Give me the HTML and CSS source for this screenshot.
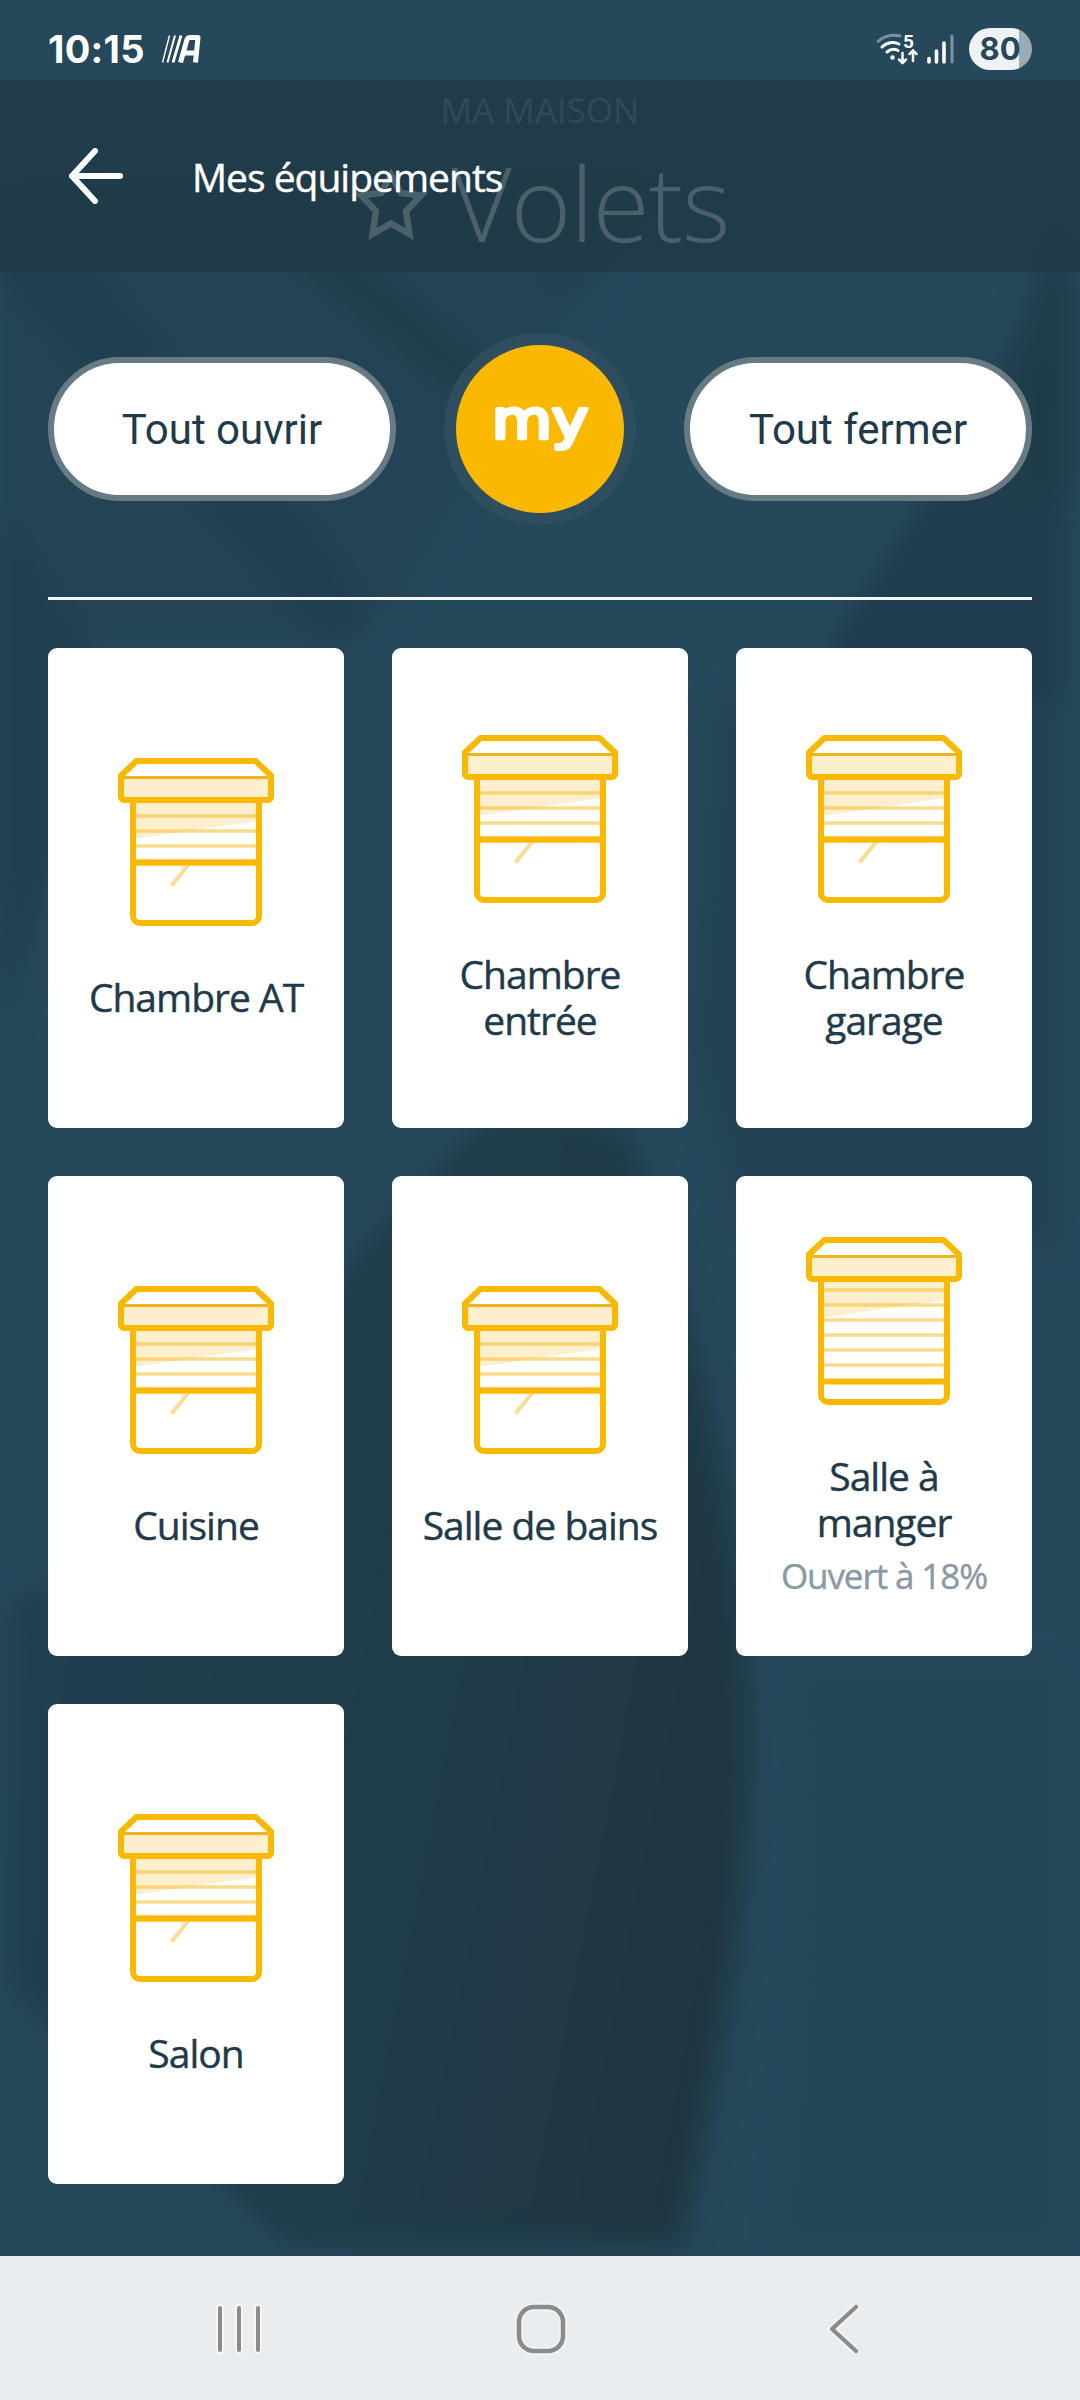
FILE: index.html
```html
<!DOCTYPE html>
<html lang="fr">
  <head>
    <meta charset="UTF-8" />
    <meta name="viewport" content="width=device-width, initial-scale=1.0" />
    <title>Mes équipements - Volets</title>
    <link rel="stylesheet" href="styles.css">
  </head>
  <body>
    <!-- Shared icons -->
    <svg class="sprite" width="0" height="0">
      <symbol id="shutter-half" viewBox="0 0 156 168">
        <path d="M18 44H138V63L18 80.5Z" fill="#fdefcd" />
        <path d="M18 58H138M18 73H138M18 88H138M18 103H138M18 106H138" stroke="#f4bd2b" stroke-opacity="0.55" stroke-width="3.6" />
        <path d="M71 106L53.5 127.5" stroke="#f9dd92" stroke-width="4" />
        <path d="M15 42V158a7 7 0 0 0 7 7H134a7 7 0 0 0 7-7V42M15 104.5H141" fill="none" stroke="#f8b900" stroke-width="6" />
        <path d="M4 19.5H152V42H4Z" fill="#fdefcd" />
        <path d="M4 19.5H152" stroke="#f0b51c" stroke-width="3" />
        <path d="M3 17.5L18.5 3H137.5L153 17.5V39a3 3 0 0 1-3 3H6a3 3 0 0 1-3-3Z" fill="none" stroke="#f8b900" stroke-width="6" stroke-linejoin="round" />
      </symbol>
      <symbol id="shutter-low" viewBox="0 0 156 168">
        <path d="M18 44H138V63L18 80.5Z" fill="#fdefcd" />
        <path d="M18 53H138M18 68H138M18 83H138M18 98H138M18 113H138M18 128H138" stroke="#f4bd2b" stroke-opacity="0.55" stroke-width="3.6" />
        <path d="M15 42V158a7 7 0 0 0 7 7H134a7 7 0 0 0 7-7V42M15 144.5H141" fill="none" stroke="#f8b900" stroke-width="6" />
        <path d="M4 19.5H152V42H4Z" fill="#fdefcd" />
        <path d="M4 19.5H152" stroke="#f0b51c" stroke-width="3" />
        <path d="M3 17.5L18.5 3H137.5L153 17.5V39a3 3 0 0 1-3 3H6a3 3 0 0 1-3-3Z" fill="none" stroke="#f8b900" stroke-width="6" stroke-linejoin="round" />
      </symbol>
    </svg>

    <div class="screen">
      <!-- Blurred backdrop -->
      <svg class="backdrop" viewBox="0 0 1080 2256">
        <defs>
          <filter id="soft" x="-20%" y="-20%" width="140%" height="140%" color-interpolation-filters="sRGB">
            <feGaussianBlur stdDeviation="14" />
          </filter>
          <linearGradient id="blob" x1="0" y1="0.4" x2="1" y2="0.7">
            <stop offset="0" stop-color="#223f50" />
            <stop offset="0.55" stop-color="#1f3c49" />
            <stop offset="1" stop-color="#1e3641" />
          </linearGradient>
        </defs>
        <g filter="url(#soft)">
          <path d="M0 180H680L560 330L400 600L350 640L0 640Z" fill="#244455" />
          <path d="M0 190L90 260L340 560L370 620L330 650L250 560L0 280Z" fill="#213f50" />
          <path d="M220 200L330 230L480 360L500 420L440 380Z" fill="#203e4b" />
          <path d="M480 180H660L560 300Z" fill="#224151" />
          <path d="M0 510L60 600L110 690L40 900L0 1040Z" fill="#213f4f" />
          <path d="M1064 210L1020 330L925 500L835 640L800 720H1064Z" fill="#203d4d" />
          <path d="M1070 250L1035 340L1020 480L1070 500Z" fill="#1f3b47" />
          <path d="M720 700H1064V1250L740 1220L690 1040Z" fill="#234354" />
          <path d="M480 1124C520 1100 600 1100 630 1140C700 1330 748 1560 748 1730C748 1960 700 2140 682 2246H290L220 2180L10 1990V1600C150 1560 240 1490 300 1370C340 1240 430 1190 480 1124Z" fill="url(#blob)" />
          <path d="M800 1670H1060V2240H780C800 2100 815 1900 800 1670Z" fill="#244556" />
        </g>
      </svg>

      <!-- Status bar -->
      <div class="status-bar">
        <span class="time">10:15</span>
        <svg class="operator" width="40" height="28" viewBox="0 0 40 28">
          <path d="M0.5 27.5L7.5 0.5" stroke="#fff" stroke-width="1.4" />
          <path d="M5.5 27.5L13 0.5" stroke="#fff" stroke-width="2" />
          <path d="M11 27.5L19 0.5" stroke="#fff" stroke-width="2.8" />
          <path d="M18.5 27.5L25 4.5Q26 2.5 28 2.5H36L33.5 27.5M23 18H34" fill="none" stroke="#fff" stroke-width="5" stroke-linejoin="round" />
        </svg>
        <div class="status-icons">
          <svg class="wifi" width="44" height="34" viewBox="0 0 44 34">
            <g fill="none" stroke="#fff" stroke-width="3" stroke-linecap="round">
              <path d="M2 9.5C8 4 16 2 24 4" stroke="#7a909c" />
              <path d="M6 15C11 10 18 9.5 23 12" />
              <path d="M11 20C15 16.5 18 16.5 22 18.5" />
              <path d="M26.5 21V31M23 27.5L26.5 31L30 27.5M37 29V18.5M33.5 22L37 18.5L40.5 22" stroke-width="2.5" />
            </g>
            <circle cx="16.5" cy="25.5" r="2.2" fill="#fff" />
            <text class="wifi-gen" x="27" y="15.5">5</text>
          </svg>
          <svg class="signal" width="27" height="30" viewBox="0 0 27 30">
            <path d="M2 24.5V28M9.5 17V28M17 9V28" stroke="#fff" stroke-width="3.6" stroke-linecap="round" />
            <path d="M25 2V28" stroke="#7a909c" stroke-width="3.2" stroke-linecap="round" />
          </svg>
          <div class="battery">80</div>
        </div>
      </div>

      <!-- Header, the page title scrolls underneath -->
      <div class="header">
        <div class="scrolled-title">
          <div class="home-name">MA MAISON</div>
          <div class="category">
            <svg width="74" height="78" viewBox="0 0 74 78">
              <path d="M37 12L47 30L67 32.5L52 48L55.5 71L37 60.5L18.5 71L22 48L7 32.5L27 30Z" fill="none" stroke="#4a606b" stroke-width="6.5" />
            </svg>
            <span>Volets</span>
          </div>
        </div>
        <svg class="back" width="56" height="56" viewBox="0 0 56 56">
          <path d="M52 28H4M27 3L4 28L27 53" fill="none" stroke="#fff" stroke-width="6" stroke-linecap="round" stroke-linejoin="round" />
        </svg>
        <h1>Mes équipements</h1>
      </div>

      <div class="actions">
        <button class="pill">Tout ouvrir</button>
        <button class="my-btn">
          <svg width="168" height="168" viewBox="0 0 168 168">
            <text class="my-text" x="36" y="93" textLength="96" lengthAdjust="spacingAndGlyphs">my</text>
          </svg>
        </button>
        <button class="pill">Tout fermer</button>
      </div>

      <div class="grid">
        <div class="card">
          <svg class="shutter"><use href="#shutter-half" /></svg>
          <div class="name">Chambre AT</div>
        </div>
        <div class="card">
          <svg class="shutter"><use href="#shutter-half" /></svg>
          <div class="name">Chambre<br>entrée</div>
        </div>
        <div class="card">
          <svg class="shutter"><use href="#shutter-half" /></svg>
          <div class="name">Chambre<br>garage</div>
        </div>
        <div class="card">
          <svg class="shutter"><use href="#shutter-half" /></svg>
          <div class="name">Cuisine</div>
        </div>
        <div class="card">
          <svg class="shutter"><use href="#shutter-half" /></svg>
          <div class="name">Salle de bains</div>
        </div>
        <div class="card">
          <svg class="shutter"><use href="#shutter-low" /></svg>
          <div class="name">Salle à<br>manger</div>
          <div class="state">Ouvert à 18%</div>
        </div>
        <div class="card">
          <svg class="shutter"><use href="#shutter-half" /></svg>
          <div class="name">Salon</div>
        </div>
      </div>
    </div>

    <!-- Android navigation bar -->
    <div class="nav-bar">
      <svg width="48" height="52" viewBox="0 0 48 52">
        <path d="M5 5V47M24 5V47M43 5V47" stroke="#f6f6f6" stroke-width="8" stroke-linecap="round" />
        <path d="M5 5V47M24 5V47M43 5V47" stroke="#8a8b8d" stroke-width="4" stroke-linecap="round" />
      </svg>
      <svg class="home" width="54" height="54" viewBox="0 0 54 54">
        <rect x="5" y="5" width="44" height="44" rx="15" fill="none" stroke="#f4f4f4" stroke-width="8" />
        <rect x="5" y="5" width="44" height="44" rx="15" fill="none" stroke="#8a8b8d" stroke-width="4.5" />
      </svg>
      <svg width="34" height="52" viewBox="0 0 34 52">
        <path d="M29 4L5 26L29 48" fill="none" stroke="#f4f4f4" stroke-width="8" />
        <path d="M29 4L5 26L29 48" fill="none" stroke="#8a8b8d" stroke-width="4.2" stroke-linecap="round" stroke-linejoin="round" />
      </svg>
    </div>
  </body>
</html>
```
FILE: styles.css
```css
* {
  box-sizing: border-box;
}

body {
  margin: 0;
  width: 1080px;
  height: 2400px;
  font-family: "Open Sans", sans-serif;
  background-color: #26485b;
  color: #fff;
  display: flex;
  flex-direction: column;
}

.sprite {
  position: absolute;
}

.screen {
  position: relative;
  height: 2256px;
  overflow: hidden;
}

.backdrop {
  position: absolute;
  top: 0;
  left: 0;
  width: 1080px;
  height: 2256px;
  z-index: -1;
}

/* Status bar */
.status-bar {
  height: 80px;
  padding: 18px 48px 0;
  display: flex;
  align-items: center;
  background-color: #26485b;
}

.time {
  font-family: Inter, sans-serif;
  font-weight: 700;
  font-size: 38px;
  letter-spacing: 0.3px;
  line-height: 40px;
}

.operator {
  margin-left: 17px;
}

.status-icons {
  margin-left: auto;
  display: flex;
  align-items: center;
}

.wifi {
  overflow: visible;
}

.wifi-gen {
  font-family: Roboto, sans-serif;
  font-weight: 700;
  font-size: 19px;
  fill: #fff;
}

.signal {
  margin-left: 7px;
}

.battery {
  margin-left: 15px;
  width: 63px;
  height: 42px;
  padding-right: 1px;
  border-radius: 21px;
  background: linear-gradient(to right, #eff2f5 50px, #9aabb4 50px);
  color: #26485b;
  font-family: Inter, sans-serif;
  font-weight: 700;
  font-size: 31px;
  line-height: 41px;
  text-align: center;
}

/* Header */
.header {
  position: relative;
  height: 192px;
  padding-left: 68px;
  display: flex;
  align-items: center;
  background-color: rgba(31, 59, 72, 0.92);
}

.header h1 {
  position: relative;
  margin: 0 0 0 68px;
  font-weight: 400;
  font-size: 39px;
  letter-spacing: -1px;
  -webkit-text-stroke: 0.4px #fff;
}

.scrolled-title {
  position: absolute;
  top: 0;
  left: 0;
  width: 100%;
  text-align: center;
}

.home-name {
  padding-top: 6px;
  font-size: 35px;
  line-height: 48px;
  color: #304b57;
}

.category {
  padding-left: 3px;
  display: flex;
  justify-content: center;
  align-items: center;
  gap: 24px;
  font-weight: 300;
  font-size: 104px;
  letter-spacing: -1.2px;
  line-height: 135px;
  color: #4a606b;
}

/* Group actions */
.actions {
  margin: 0 48px;
  height: 328px;
  padding-bottom: 11px;
  border-bottom: 3px solid #f3f5fa;
  display: flex;
  justify-content: space-between;
  align-items: center;
}

.pill {
  width: 348px;
  height: 144px;
  padding: 0;
  border: 6px solid #687b84;
  border-radius: 72px;
  background-color: #fff;
  color: #1f3a49;
  font-family: Roboto, sans-serif;
  font-size: 42px;
}

.my-btn {
  width: 192px;
  height: 192px;
  padding: 0;
  border: 12px solid #2e4d5f;
  border-radius: 50%;
  background-color: #fab900;
}

.my-btn svg {
  display: block;
}

.my-text {
  font-family: "DejaVu Sans", sans-serif;
  font-size: 54px;
  fill: #fff;
  stroke: #fff;
  stroke-width: 4px;
  stroke-linejoin: round;
}

/* Equipment cards */
.grid {
  margin: 48px 48px 0;
  display: grid;
  grid-template-columns: repeat(3, 296px);
  grid-auto-rows: 480px;
  gap: 48px;
}

.card {
  padding-bottom: 4px;
  border-radius: 9px;
  background-color: #fff;
  color: #1f3a49;
  display: flex;
  flex-direction: column;
  align-items: center;
  justify-content: center;
  text-align: center;
}

.shutter {
  width: 156px;
  height: 168px;
  margin: 5px 0 48px;
}

.name {
  font-size: 39px;
  letter-spacing: -1px;
  line-height: 46px;
  -webkit-text-stroke: 0.4px #1f3a49;
}

.state {
  margin: 8px 0 -3px;
  font-size: 35px;
  letter-spacing: -1.1px;
  line-height: 46px;
  color: #8b99a6;
  -webkit-text-stroke: 0.4px #8b99a6;
}

/* Navigation bar */
.nav-bar {
  height: 144px;
  padding: 1px 0 0 215px;
  background-color: #e9edf0;
  display: flex;
  align-items: center;
}

.home {
  margin: 0 259px 0 251px;
}
```
